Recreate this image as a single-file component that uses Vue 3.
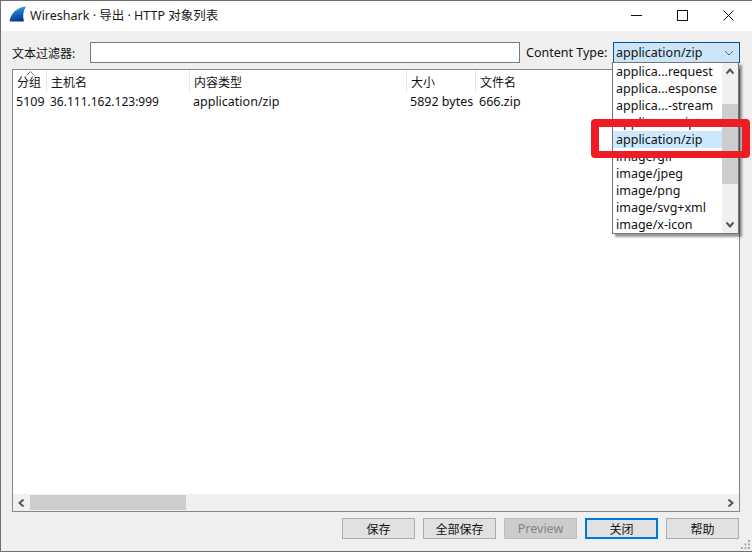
<template>
  <div class="window">
    <header class="titlebar">
      <svg class="app-icon" viewBox="0 0 18 16">
        <defs>
          <linearGradient id="fin" x1="0" y1="0" x2="0.3" y2="1">
            <stop offset="0" stop-color="#5cb0ee" />
            <stop offset="0.55" stop-color="#1a6cc4" />
            <stop offset="1" stop-color="#0a3a8c" />
          </linearGradient>
        </defs>
        <path d="M0.5 15.5 C1.5 8 7 1.5 17 0.5 C14 5 13.5 10 15 15.5 Z" fill="url(#fin)" />
      </svg>
      <span class="title">Wireshark · 导出 · HTTP 对象列表</span>
      <div class="controls">
        <svg viewBox="0 0 11 11"><path d="M0 5.5H11" stroke="#111" fill="none" /></svg>
        <svg viewBox="0 0 11 11"><rect x="0.5" y="0.5" width="10" height="10" stroke="#111" fill="none" /></svg>
        <svg viewBox="0 0 11 11"><path d="M0.5 0.5L10.5 10.5M10.5 0.5L0.5 10.5" stroke="#111" fill="none" /></svg>
      </div>
    </header>

    <div class="body">
      <div class="filter-row">
        <label class="filter-label">文本过滤器:</label>
        <div class="filter-input"></div>
        <label class="type-label">Content Type:</label>
        <div class="combo">
          <span>application/zip</span>
          <svg viewBox="0 0 10 6"><path d="M1 1L5 5L9 1" stroke="#5a6b7a" fill="none" /></svg>
        </div>
      </div>

      <div class="table">
        <div class="thead">
          <div v-for="col in columns" :key="col.label" class="th" :style="{ width: col.width + 'px' }">{{ col.label }}</div>
          <svg class="sort-arrow" viewBox="0 0 9 5"><path d="M0.5 4.5L4.5 0.5L8.5 4.5" stroke="#777" fill="none" /></svg>
        </div>
        <div class="tbody">
          <div class="tr">
            <div
              v-for="(cell, i) in row"
              :key="cell"
              class="td"
              :class="{ host: i === 1 }"
              :style="{ width: columns[i].width + 'px' }"
            >{{ cell }}</div>
          </div>
        </div>
        <div class="hscroll">
          <svg class="arrow" viewBox="0 0 7 8"><path d="M5.5 0.5L1.5 4L5.5 7.5" stroke="#555" stroke-width="2" fill="none" /></svg>
          <div class="track"><div class="thumb"></div></div>
          <svg class="arrow" viewBox="0 0 7 8"><path d="M1.5 0.5L5.5 4L1.5 7.5" stroke="#555" stroke-width="2" fill="none" /></svg>
        </div>
      </div>

      <footer class="buttons">
        <button type="button" class="btn">保存</button>
        <button type="button" class="btn">全部保存</button>
        <button type="button" class="btn disabled">Preview</button>
        <button type="button" class="btn primary">关闭</button>
        <button type="button" class="btn">帮助</button>
      </footer>
    </div>

    <div class="dropdown">
      <ul class="options">
        <li v-for="item in options" :key="item" :class="{ current: item === 'application/zip' }">{{ item }}</li>
      </ul>
      <div class="vscroll">
        <svg class="arrow-v" viewBox="0 0 8 7"><path d="M0.5 5.5L4 1.5L7.5 5.5" stroke="#555" stroke-width="2" fill="none" /></svg>
        <div class="vtrack"><div class="vthumb"></div></div>
        <svg class="arrow-v" viewBox="0 0 8 7"><path d="M0.5 1.5L4 5.5L7.5 1.5" stroke="#555" stroke-width="2" fill="none" /></svg>
      </div>
    </div>

    <div class="highlight"></div>

    <svg class="grip" viewBox="0 0 10 10" fill="#aaa">
      <rect x="7" y="0" width="2" height="2" />
      <rect x="3.5" y="3.5" width="2" height="2" />
      <rect x="7" y="3.5" width="2" height="2" />
      <rect x="0" y="7" width="2" height="2" />
      <rect x="3.5" y="7" width="2" height="2" />
      <rect x="7" y="7" width="2" height="2" />
    </svg>
  </div>
</template>

<script setup>
const columns = [
  { label: '分组', width: 34 },
  { label: '主机名', width: 143 },
  { label: '内容类型', width: 217 },
  { label: '大小', width: 69 },
  { label: '文件名', width: 263 }
]

const row = ['5109', '36.111.162.123:999', 'application/zip', '5892 bytes', '666.zip']

const options = [
  'applica...request',
  'applica...esponse',
  'applica...-stream',
  'applica...script',
  'application/zip',
  'image/gif',
  'image/jpeg',
  'image/png',
  'image/svg+xml',
  'image/x-icon'
]
</script>

<style>
html, body { margin: 0; background: #efefef; }
</style>

<style scoped>
.window {
  position: relative;
  box-sizing: border-box;
  width: 752px;
  height: 552px;
  display: flex;
  flex-direction: column;
  overflow: hidden;
  border: 1px solid #6f6f6f;
  border-right: 0;
  background: #efefef;
  color: #111;
  font-family: "Noto Sans", "Noto Sans CJK SC", sans-serif;
  font-size: 12px;
}

.titlebar {
  flex: none;
  box-sizing: border-box;
  height: 30px;
  display: flex;
  align-items: center;
  padding: 0 0 4px 8px;
  background: #fff;
}

.app-icon { width: 18px; height: 16px; margin-right: 3px; }

.title { font-size: 12.5px; color: #1a1a1a; }

.controls {
  margin: 2px 18px 0 auto;
  display: flex;
  gap: 35px;
}

.controls svg { width: 11px; height: 11px; display: block; }

.body {
  flex: 1;
  min-height: 0;
  display: flex;
  flex-direction: column;
  padding: 11px 12px 12px 11px;
}

.filter-row {
  flex: none;
  height: 21px;
  display: flex;
  align-items: center;
}

.filter-label { width: 78px; }

.filter-input {
  box-sizing: border-box;
  width: 430px;
  height: 21px;
  background: #fff;
  border: 1px solid #7a7a7a;
}

.type-label { margin-left: 6px; width: 87px; white-space: nowrap; font-size: 12.5px; }

.combo {
  box-sizing: border-box;
  width: 127px;
  height: 21px;
  display: flex;
  align-items: center;
  justify-content: space-between;
  padding: 0 5px 0 2px;
  font-size: 12.5px;
  background: #cce4f7;
  border: 1px solid #005499;
}

.combo svg { width: 10px; height: 6px; }

.table {
  flex: none;
  margin-top: 6px;
  height: 443px;
  box-sizing: border-box;
  display: flex;
  flex-direction: column;
  background: #fff;
  border: 1px solid #828790;
}

.thead {
  position: relative;
  flex: none;
  height: 22px;
  display: flex;
  align-items: center;
}

.th {
  box-sizing: border-box;
  height: 22px;
  line-height: 25px;
  padding-left: 4px;
  border-right: 1px solid #e5e5e5;
}

.th:last-of-type { border-right: 0; }

.sort-arrow {
  position: absolute;
  left: 13px;
  top: 1px;
  width: 9px;
  height: 5px;
}

.tbody { flex: 1; min-height: 0; }

.tr { display: flex; height: 18px; align-items: center; }

.td {
  box-sizing: border-box;
  padding-left: 3px;
  white-space: nowrap;
  font-size: 12.5px;
}

.td.host { font-size: 12px; }

.hscroll {
  flex: none;
  height: 17px;
  display: flex;
  align-items: center;
  background: #f0f0f0;
}

.hscroll .arrow { flex: none; width: 7px; height: 8px; margin: 0 5px; }

.track { flex: 1; height: 15px; }

.thumb { width: 156px; height: 15px; background: #cdcdcd; }

.buttons {
  flex: none;
  margin: 6px 1px 0 0;
  height: 21px;
  display: flex;
  justify-content: flex-end;
  gap: 8px;
}

.btn {
  box-sizing: border-box;
  width: 73px;
  height: 21px;
  padding: 0;
  font: inherit;
  color: #111;
  background: #e1e1e1;
  border: 1px solid #adadad;
}

.btn.disabled {
  background: #ccc;
  border-color: #bfbfbf;
  color: #838383;
  font-size: 12.5px;
}

.btn.primary { border: 2px solid #0078d7; }

.dropdown {
  position: absolute;
  left: 611px;
  top: 61px;
  box-sizing: border-box;
  width: 127px;
  height: 172px;
  display: flex;
  font-size: 12.5px;
  background: #fff;
  border: 1px solid #767676;
  box-shadow: 3px 3px 2px rgba(0, 0, 0, 0.4);
}

.options {
  flex: 1;
  margin: 0;
  padding: 0;
  list-style: none;
}

.options li {
  height: 17px;
  line-height: 17px;
  padding-left: 3px;
  white-space: nowrap;
  overflow: hidden;
}

.options li.current { background: #cce8ff; }

.vscroll {
  flex: none;
  width: 16px;
  display: flex;
  flex-direction: column;
  align-items: center;
  background: #f0f0f0;
}

.arrow-v { flex: none; width: 8px; height: 7px; margin: 5px 0; }

.vtrack { flex: 1; width: 100%; padding-top: 24px; box-sizing: border-box; }

.vthumb { height: 80px; background: #cdcdcd; }

.highlight {
  position: absolute;
  left: 590px;
  top: 118px;
  box-sizing: border-box;
  width: 159px;
  height: 39px;
  border: 8px solid #ee1c25;
  border-bottom-width: 7px;
  border-radius: 4px;
}

.grip {
  position: absolute;
  right: 1px;
  bottom: 1px;
  width: 10px;
  height: 10px;
}
</style>
